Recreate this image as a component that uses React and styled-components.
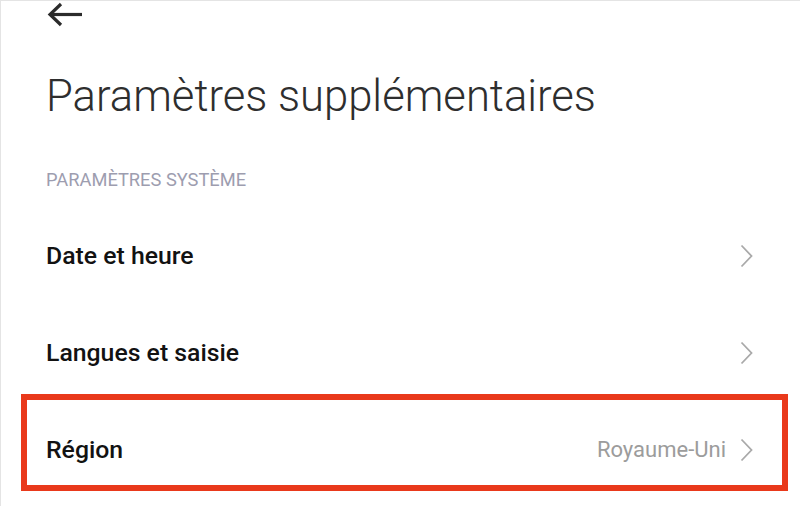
import React from "react";
import styled, { createGlobalStyle } from "styled-components";

const GlobalStyle = createGlobalStyle`
  html, body {
    margin: 0;
    padding: 0;
    background: #ffffff;
  }
  body {
    font-family: Roboto, "Noto Sans", "Liberation Sans", sans-serif;
    -webkit-font-smoothing: antialiased;
  }
`;

const Page = styled.div`
  width: 800px;
  height: 506px;
  box-sizing: border-box;
  border-top: 1px solid #e4e4e4;
  border-left: 1px solid #e4e4e4;
  background: #ffffff;
  overflow: hidden;
`;

const TopBar = styled.div`
  height: 28px;
  display: flex;
  align-items: center;
  padding-left: 46px;
`;

const BackButton = styled.button`
  border: none;
  background: none;
  padding: 0;
  display: flex;
  color: #2b2b2b;
  cursor: pointer;
`;

const Title = styled.h1`
  margin: 42px 0 0;
  padding-left: 45px;
  font-size: 43.6px;
  line-height: 52px;
  font-weight: 300;
  color: #2e2e2e;
`;

const SectionHeader = styled.div`
  margin-top: 47px;
  padding-left: 45px;
  font-size: 18.3px;
  line-height: 20px;
  font-weight: 400;
  color: #9d9daf;
  text-transform: uppercase;
`;

const List = styled.div`
  padding-top: 17px;
  display: flex;
  flex-direction: column;
`;

const Row = styled.div`
  position: relative;
  height: 97px;
  display: flex;
  align-items: center;
  padding: 0 47px 0 45px;
  cursor: pointer;
`;

const Label = styled.span`
  flex: 1;
  font-size: 24.8px;
  font-weight: 500;
  color: #121212;
`;

const Value = styled.span`
  font-size: 22px;
  font-weight: 400;
  color: #9c9c9c;
  margin-right: 14px;
`;

const Highlight = styled.div`
  position: absolute;
  top: -7.5px;
  bottom: 7.5px;
  left: 20px;
  right: 12px;
  border: 6.5px solid #e9391b;
  pointer-events: none;
`;

const BackArrow = () => (
  <svg width="36" height="26" viewBox="0 0 36 26" fill="none">
    <path d="M3 12.5 H35" stroke="currentColor" strokeWidth="3.2" />
    <path
      d="M14 2 L3 12.5 L14 23"
      stroke="currentColor"
      strokeWidth="3.2"
      strokeLinejoin="miter"
    />
  </svg>
);

const Chevron = () => (
  <svg width="13" height="24" viewBox="0 0 13 24" fill="none">
    <path
      d="M1.5 1.5 L11.5 12 L1.5 22.5"
      stroke="#a9a9a9"
      strokeWidth="1.8"
    />
  </svg>
);

const items = [
  { label: "Date et heure" },
  { label: "Langues et saisie" },
  { label: "Région", value: "Royaume-Uni", highlight: true },
];

const App = () => (
  <>
    <GlobalStyle />
    <Page>
      <TopBar>
        <BackButton aria-label="Retour">
          <BackArrow />
        </BackButton>
      </TopBar>
      <Title>Paramètres supplémentaires</Title>
      <SectionHeader>Paramètres système</SectionHeader>
      <List>
        {items.map((item) => (
          <Row key={item.label}>
            <Label>{item.label}</Label>
            {item.value && <Value>{item.value}</Value>}
            <Chevron />
            {item.highlight && <Highlight />}
          </Row>
        ))}
      </List>
    </Page>
  </>
);

export default App;
